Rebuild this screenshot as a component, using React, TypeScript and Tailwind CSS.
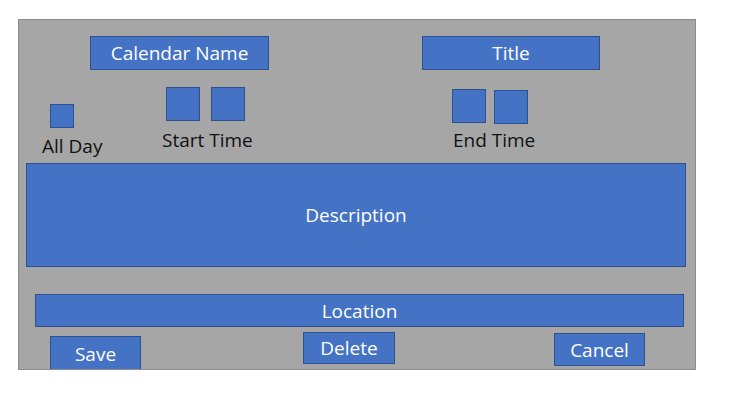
import React from "react";

const font = { fontFamily: '"Open Sans", "Noto Sans", sans-serif' };

function Box({ className, children }: { className: string; children?: React.ReactNode }) {
  return (
    <div
      className={
        "box-border flex items-center justify-center border border-[#2f528f] bg-[#4472c4] text-white text-[19px] leading-[24px] " +
        className
      }
    >
      {children}
    </div>
  );
}

export default function App() {
  return (
    <div className="min-h-[415px] w-[739px] bg-white pt-[19px] pl-[18px]" style={font}>
      <div className="box-border flex h-[351px] w-[678px] flex-col overflow-hidden border border-[#8c8c8c] bg-[#a6a6a6]">
        {/* Row 1 */}
        <div className="mt-[16px] flex h-[34px] shrink-0">
          <Box className="ml-[71px] h-[34px] w-[179px]">Calendar Name</Box>
          <Box className="ml-[153px] h-[34px] w-[178px]">Title</Box>
        </div>

        {/* Row 2 */}
        <div className="flex h-[93px] shrink-0 items-start">
          <div className="ml-[23px] mt-[34px] flex w-[61px] shrink-0 flex-col items-start">
            <div className="ml-[8px] box-border h-[24px] w-[24px] border border-[#2f528f] bg-[#4472c4]" />
            <div className="mt-[6px] whitespace-nowrap text-[19px] leading-[24px] text-[#111]">All Day</div>
          </div>
          <div className="ml-[59px] mt-[17px] flex w-[90px] shrink-0 flex-col items-start">
            <div className="ml-[4px] flex gap-[11px]">
              <div className="box-border h-[34px] w-[34px] border border-[#2f528f] bg-[#4472c4]" />
              <div className="box-border h-[34px] w-[34px] border border-[#2f528f] bg-[#4472c4]" />
            </div>
            <div className="mt-[7px] whitespace-nowrap text-[19px] leading-[24px] text-[#111]">Start Time</div>
          </div>
          <div className="ml-[200px] mt-[19px] flex w-[82px] shrink-0 flex-col items-start">
            <div className="flex items-start gap-[8px]">
              <div className="box-border h-[34px] w-[34px] border border-[#2f528f] bg-[#4472c4]" />
              <div className="mt-[1px] box-border h-[34px] w-[34px] border border-[#2f528f] bg-[#4472c4]" />
            </div>
            <div className="ml-[1px] mt-[4px] whitespace-nowrap text-[19px] leading-[24px] text-[#111]">End Time</div>
          </div>
        </div>

        {/* Description */}
        <Box className="ml-[7px] h-[104px] w-[660px] shrink-0">Description</Box>

        {/* Location */}
        <Box className="ml-[16px] mt-[27px] h-[33px] w-[649px] shrink-0">Location</Box>

        {/* Buttons */}
        <div className="flex shrink-0 items-start">
          <Box className="ml-[31px] mt-[9px] h-[36px] w-[91px]">Save</Box>
          <Box className="ml-[162px] mt-[5px] h-[32px] w-[92px]">Delete</Box>
          <Box className="ml-[159px] mt-[6px] h-[33px] w-[91px]">Cancel</Box>
        </div>
      </div>
    </div>
  );
}
